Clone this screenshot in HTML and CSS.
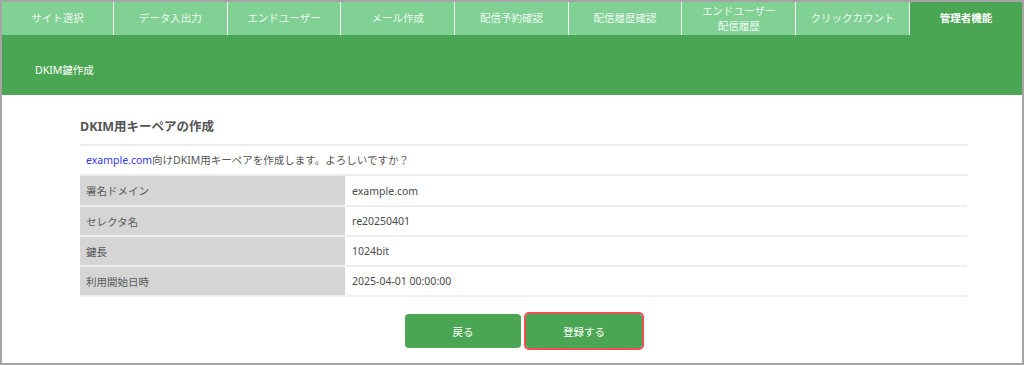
FILE: index.html
```html
<!DOCTYPE html>
<html lang="ja">
<head>
  <meta charset="UTF-8">
  <title>DKIM鍵作成</title>
  <meta name="viewport" content="width=device-width, initial-scale=1.0">
  <link rel="stylesheet" href="styles.css">
</head>
<body>
  <div class="frame">
    <nav class="tabs">
      <a class="tab">サイト選択</a>
      <a class="tab">データ入出力</a>
      <a class="tab">エンドユーザー</a>
      <a class="tab">メール作成</a>
      <a class="tab">配信予約確認</a>
      <a class="tab">配信履歴確認</a>
      <a class="tab">エンドユーザー<br>配信履歴</a>
      <a class="tab">クリックカウント</a>
      <a class="tab active">管理者機能</a>
    </nav>
    <div class="band">DKIM鍵作成</div>

    <div class="main">
      <h2 class="title">DKIM用キーペアの作成</h2>
      <p class="message"><span class="domain">example.com</span>向けDKIM用キーペアを作成します。よろしいですか？</p>
      <table class="info">
        <tr><th>署名ドメイン</th><td>example.com</td></tr>
        <tr><th>セレクタ名</th><td>re20250401</td></tr>
        <tr><th>鍵長</th><td>1024bit</td></tr>
        <tr><th>利用開始日時</th><td>2025-04-01 00:00:00</td></tr>
      </table>
      <div class="actions">
        <button class="btn">戻る</button>
        <button class="btn marked">登録する</button>
      </div>
    </div>
  </div>
</body>
</html>
```

FILE: styles.css
```css
* { box-sizing: border-box; }
body { margin: 0; font-family: "Noto Sans", "Noto Sans CJK JP", sans-serif; font-size: 10.5px; color: #555; }
.frame {
  width: 1024px; height: 365px;
  border: 2px solid #a4a4a4; background: #fff;
}

.tabs {
  display: grid; grid-template-columns: 112px repeat(7, 113.7px) 1fr;
  height: 33px; background: #81d195;
}
.tab {
  display: flex; align-items: center; justify-content: center; text-align: center;
  line-height: 15px; color: #eef8f0; border-right: 1px solid #fff;
}
.tab.active { background: #4aa652; color: #fff; font-weight: bold; border-right: none; }

.band {
  height: 60px; background: #4aa652; color: #fff;
  padding: 28px 0 0 33px; line-height: 14px;
}

.main { padding: 22px 55px 0 78px; }
.title {
  margin: 0; font-size: 12.5px; line-height: 20px; color: #555;
  padding-bottom: 7px; border-bottom: 2px solid #eee;
}
.message {
  margin: 0; height: 30px; line-height: 28px; padding-left: 6px;
  border-bottom: 2px solid #eee;
}
.domain { color: #3434ee; }

.info { width: 100%; border-collapse: collapse; }
.info th, .info td {
  height: 30px; padding: 0 6px; text-align: left; font-weight: normal;
  border-bottom: 2px solid #eee;
}
.info th { width: 265px; background: #d5d5d5; color: #5a5a5a; }
.info td { color: #4a4a4a; padding-left: 7px; }

.actions { display: flex; justify-content: center; gap: 5px; margin-top: 17px; }
.btn {
  width: 116px; height: 34px; border: none; border-radius: 4px;
  background: #4aa652; color: #fff; font: inherit; cursor: pointer;
}
.btn.marked { outline: 2px solid #ec5052; border-radius: 3px; }
```
